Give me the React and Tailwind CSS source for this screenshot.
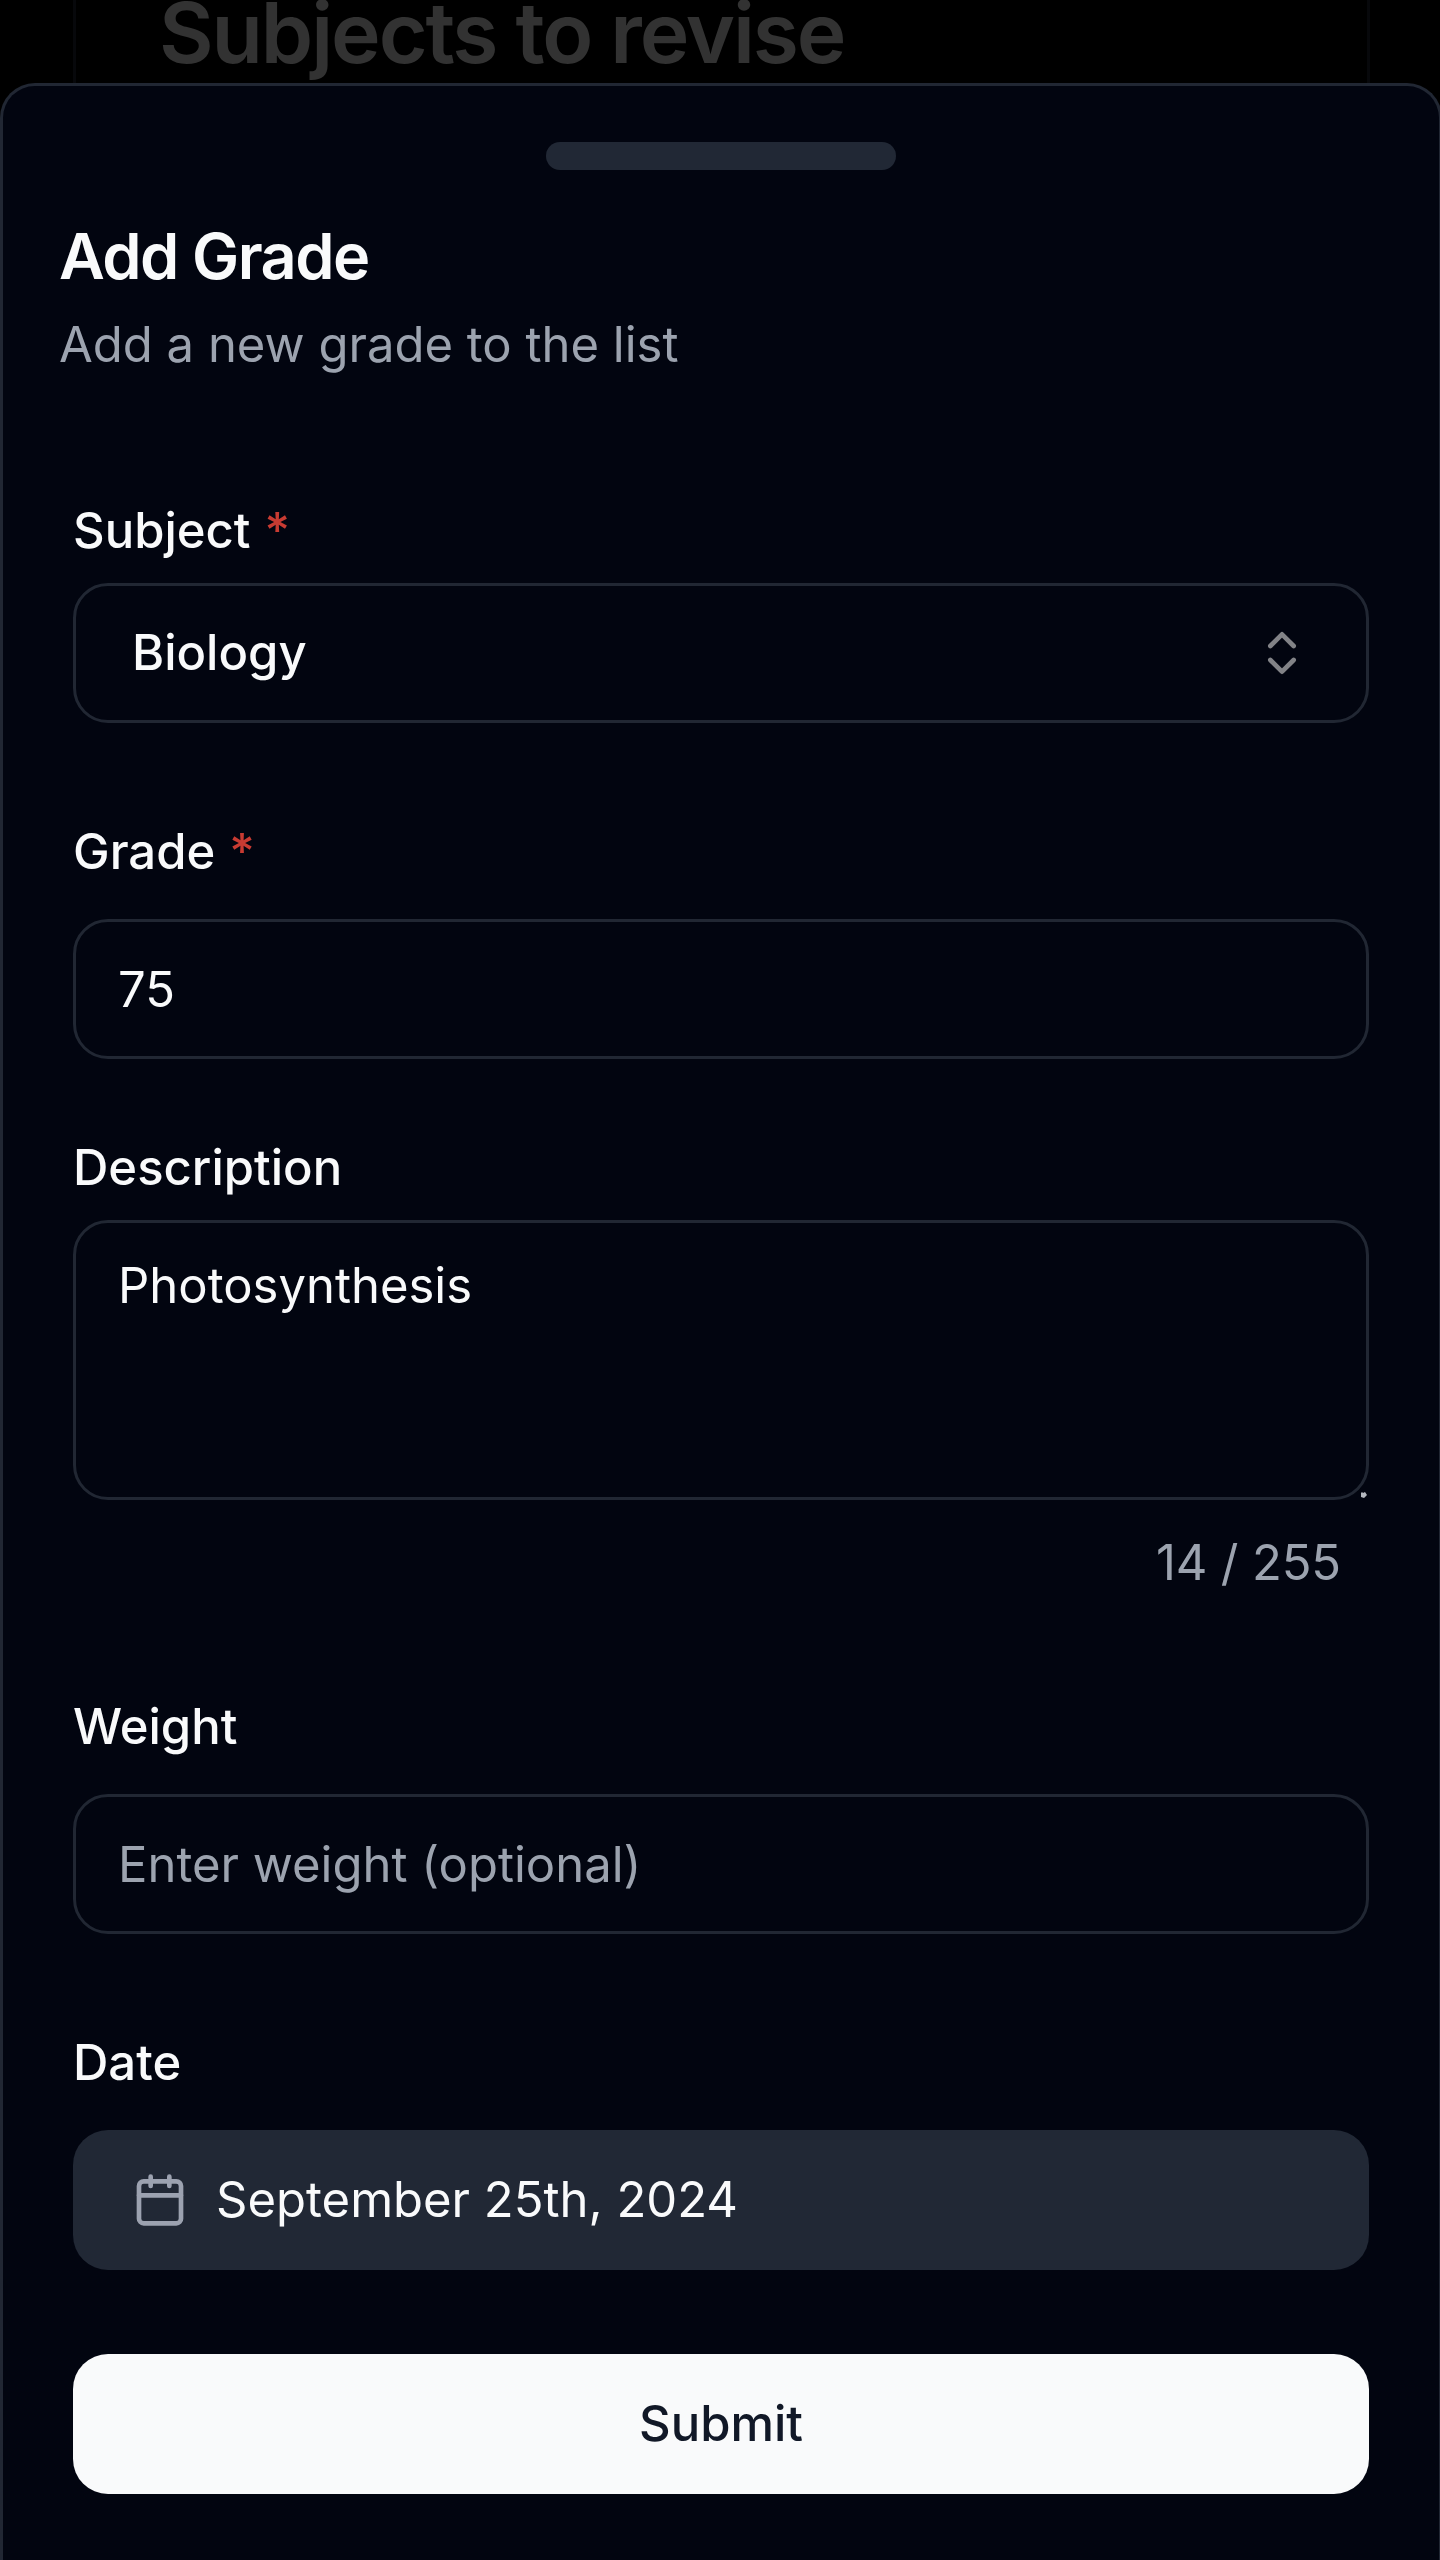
import { ChevronsUpDown } from "lucide-react";

function Label({ children, required }) {
  return (
    <label className="block text-[49px] leading-[49px] font-medium">
      {children}
      {required && <span className="ml-px text-[#c83b32]"> *</span>}
    </label>
  );
}

function CalendarIcon() {
  return (
    <svg viewBox="0 0 24 24" className="size-14 text-[#9ca2b0]" fill="none" stroke="currentColor" strokeWidth="2" strokeLinecap="round" strokeLinejoin="round">
      <rect x="3" y="4" width="18" height="18" rx="2" />
      <path d="M8 2v4M16 2v4M3 10h18" />
    </svg>
  );
}

const field =
  "block w-full rounded-[35px] border-3 border-[#212733] bg-transparent px-[42px] text-[49px] leading-[70px] outline-none placeholder:text-[#9ca3af] placeholder:opacity-100";

export default function App() {
  return (
    <div className="h-[2560px] w-[1440px] overflow-hidden bg-black font-['Inter',sans-serif] text-[#f9fafb]">
      <div className="mx-[73px] flex h-[83px] w-[1297px] items-start border-x-3 border-[#07080b] pl-[83px]">
        <h1 className="text-[84px] leading-[66px] font-semibold tracking-tight whitespace-nowrap text-[#323232]">
          Subjects to revise
        </h1>
      </div>

      <section className="h-[2480px] w-[1442px] rounded-t-[35px] border-3 border-b-0 border-[#212733] bg-[#020510] pt-14">
        <div className="ml-[543px] h-7 w-[350px] rounded-full bg-[#212835]" />

        <header className="mt-[55px] pl-[56px]">
          <h2 className="text-[63px] leading-[63px] font-semibold tracking-tight">Add Grade</h2>
          <p className="mt-[22px] text-[49px] leading-[70px] text-[#9ca3af]">Add a new grade to the list</p>
        </header>

        <form className="mt-[126px] ml-[70px] w-[1296px]">
          <Label required>Subject</Label>
          <button type="button" className="mt-7 flex h-[140px] w-full items-center justify-between rounded-[35px] border-3 border-[#212733] px-14 text-[49px] leading-[70px] font-medium">
            <span>Biology</span>
            <ChevronsUpDown className="size-14 text-[#828387]" strokeWidth={2} />
          </button>

          <div className="mt-[104px]">
            <Label required>Grade</Label>
            <input className={`${field} mt-[43px] h-[140px]`} defaultValue="75" />
          </div>

          <div className="mt-[84px]">
            <Label>Description</Label>
            <div className="relative mt-7">
              <textarea className={`${field} h-[280px] resize-none py-7`} spellCheck={false} defaultValue="Photosynthesis" />
              <svg className="absolute right-[2px] bottom-[2px] size-[6px]" viewBox="0 0 6 6">
                <path d="M0 1L1 0L2 1L4 0L6 3L3 6L0 5Z" fill="#b4b8bf" />
              </svg>
            </div>
            <p className="mt-7 pr-7 text-right text-[49px] leading-[70px] tracking-[-0.15px] text-[#9ca3af]">14 / 255</p>
          </div>

          <div className="mt-[104px]">
            <Label>Weight</Label>
            <input className={`${field} mt-[43px] h-[140px]`} placeholder="Enter weight (optional)" />
          </div>

          <div className="mt-[104px]">
            <Label>Date</Label>
            <button type="button" className="mt-[43px] flex h-[140px] w-full items-center gap-7 rounded-[35px] bg-[#212835] px-[59px] text-[49px] leading-[70px]">
              <CalendarIcon />
              <span>September 25th, 2024</span>
            </button>
          </div>

          <button type="button" className="mt-[84px] h-[140px] w-full rounded-[35px] bg-[#f9fafb] text-[49px] leading-[70px] font-medium text-[#111827]">
            Submit
          </button>
        </form>
      </section>
    </div>
  );
}
